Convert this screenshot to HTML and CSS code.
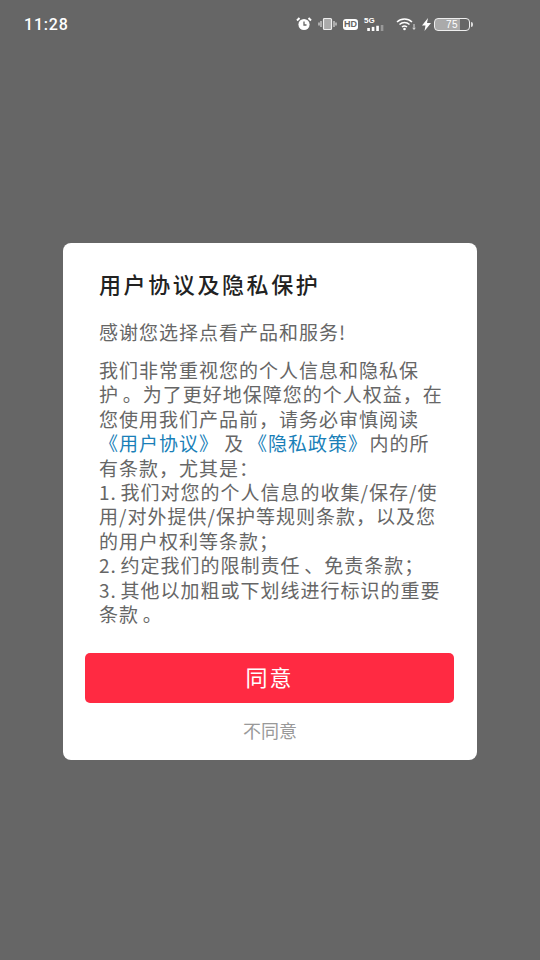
FILE: index.html
```html
<!DOCTYPE html>
<html lang="zh-CN">
<head>
<meta charset="utf-8">
<title>用户协议及隐私保护</title>
<link rel="stylesheet" href="styles.css">
</head>
<body>
<div class="status">
  <span class="time">11:28</span>
  <div class="icons">
    <svg class="i" width="16" height="14" viewBox="0 0 16 14"><circle cx="8" cy="7.5" r="5.6" fill="#fff"/><path d="M1 3.5 3.5 1M15 3.5 12.5 1" stroke="#fff" stroke-width="2" fill="none"/><path d="M8 4.5V8h2.5" stroke="#666" stroke-width="1.3" fill="none"/></svg>
    <svg class="i" width="19" height="14" viewBox="0 0 19 14"><rect x="5.5" y="1.5" width="8" height="11" rx="1" fill="#aaa" stroke="#eee" stroke-width="1.2"/><path d="M3 4v6M1 5.5v3M16 4v6M18 5.5v3" stroke="#ddd" stroke-width="1.2"/></svg>
    <span class="hd">HD</span>
    <div class="sig">
      <span class="g5">5G</span>
      <svg width="26" height="8" viewBox="0 0 26 8"><rect x="0" y="4" width="3.5" height="4" fill="#fff"/><rect x="6" y="2.500" width="3.500" height="5.500" fill="#fff"/><rect x="12" y="1" width="3.500" height="7" fill="#fff"/><rect x="18" y="0" width="3.500" height="8" fill="#999"/></svg>
    </div>
    <svg class="i" width="20" height="14" viewBox="0 0 20 14"><path d="M1 5a11 11 0 0 1 15 0M3.500 7.500a7.500 7.500 0 0 1 10 0M6 10a3.800 3.800 0 0 1 5 0" stroke="#fff" stroke-width="1.500" fill="none"/><circle cx="8.500" cy="12" r="1.300" fill="#fff"/><path d="M18 7v5M16.800 10.800 18 12.500l1.200-1.700" stroke="#ddd" stroke-width="1" fill="none"/></svg>
    <svg class="i bolt" width="9" height="13" viewBox="0 0 9 13"><path d="M6 0 0 7.500h3.500L2.500 13 9 5H5z" fill="#fff"/></svg>
    <div class="batt"><span class="lvl">75</span></div>
  </div>
</div>
<main class="card">
  <h1 class="title">用户协议及隐私保护</h1>
  <p class="thanks">感谢您选择点看产品和服务!</p>
  <p class="body">我们非常重视您的个人信息和隐私保<br>护 。为了更好地保障您的个人权益，在<br>您使用我们产品前，请务必审慎阅读<br><a class="link">《用户协议》</a> 及 <a class="link">《隐私政策》</a>内的所<br>有条款，尤其是：<br>1. 我们对您的个人信息的收集/保存/使<br>用/对外提供/保护等规则条款，以及您<br>的用户权利等条款；<br>2. 约定我们的限制责任 、免责条款；<br>3. 其他以加粗或下划线进行标识的重要<br>条款 。</p>
  <button class="agree">同意</button>
  <button class="decline">不同意</button>
</main>
</body>
</html>
```
FILE: styles.css
```css
* { box-sizing: border-box; }
html, body { margin: 0; padding: 0; }
body {
  width: 540px;
  height: 960px;
  background: #666;
  overflow: hidden;
  font-family: "Noto Sans CJK SC", "Liberation Sans", sans-serif;
}
.status {
  height: 48px;
  padding: 0 70px 0 24px;
  display: flex;
  align-items: center;
  justify-content: space-between;
  color: #fff;
}
.time {
  font: 500 16px/1 Roboto, sans-serif;
  letter-spacing: .8px;
  padding-top: 1px;
}
.icons { display: flex; align-items: center; gap: 6px; }
.i { display: block; }
.hd {
  background: #fff;
  color: #666;
  font: 700 9px/11px "Liberation Sans", sans-serif;
  border-radius: 3px;
  padding: 0 1px;
  width: 15px;
  text-align: center;
}
.sig { display: flex; flex-direction: column; width: 24px; margin-right: 2px; }
.g5 { font: 700 8px/8px "Liberation Sans", sans-serif; }
.sig svg { display: block; width: 20px; height: 6px; margin-left: 3px; }
.bolt { margin-left: 0; margin-right: -3px; }
.batt {
  width: 36px;
  height: 13px;
  border: 1.2px solid #eee;
  border-radius: 4px;
  background: linear-gradient(90deg, #aaa 0 74%, transparent 74%);
  text-align: center;
  position: relative;
}
.batt::after {
  content: "";
  position: absolute;
  right: -3.500px;
  top: 3px;
  width: 2px;
  height: 5px;
  background: #ddd;
  border-radius: 0 2px 2px 0;
}
.lvl { display: block; font: 10px/11px "Liberation Sans", sans-serif; color: #fff; letter-spacing: .5px; }
.card {
  margin: 195px 0 0 63px;
  width: 414px;
  height: 517px;
  background: #fff;
  border-radius: 8px;
  padding: 24px 22px 0;
  display: flex;
  flex-direction: column;
}
.title {
  margin: 0 0 0 14px;
  font-size: 22px;
  font-weight: 500;
  line-height: 32px;
  letter-spacing: 2.600px;
  color: #222;
  white-space: nowrap;
}
.thanks, .body {
  margin: 0 0 0 14px;
  font-size: 19px;
  letter-spacing: 1px;
  color: #666;
  white-space: nowrap;
}
.thanks { margin-top: 20px; line-height: 26px; }
.body { margin-top: 13px; line-height: 24.400px; word-spacing: -1.500px; }
.link { color: #1a7fb8; margin-right: 1.500px; }
.agree {
  margin-top: 27px;
  height: 50px;
  width: 369px;
  border: 0;
  border-radius: 5px;
  background: #ff2a42;
  color: #fff;
  font: inherit;
  font-size: 22px;
  letter-spacing: 2px;
  padding: 0 0 5px;
}
.decline {
  margin-top: 15px;
  background: none;
  border: 0;
  padding: 0;
  color: #999;
  font: inherit;
  font-size: 18px;
  line-height: 24px;
}
```
